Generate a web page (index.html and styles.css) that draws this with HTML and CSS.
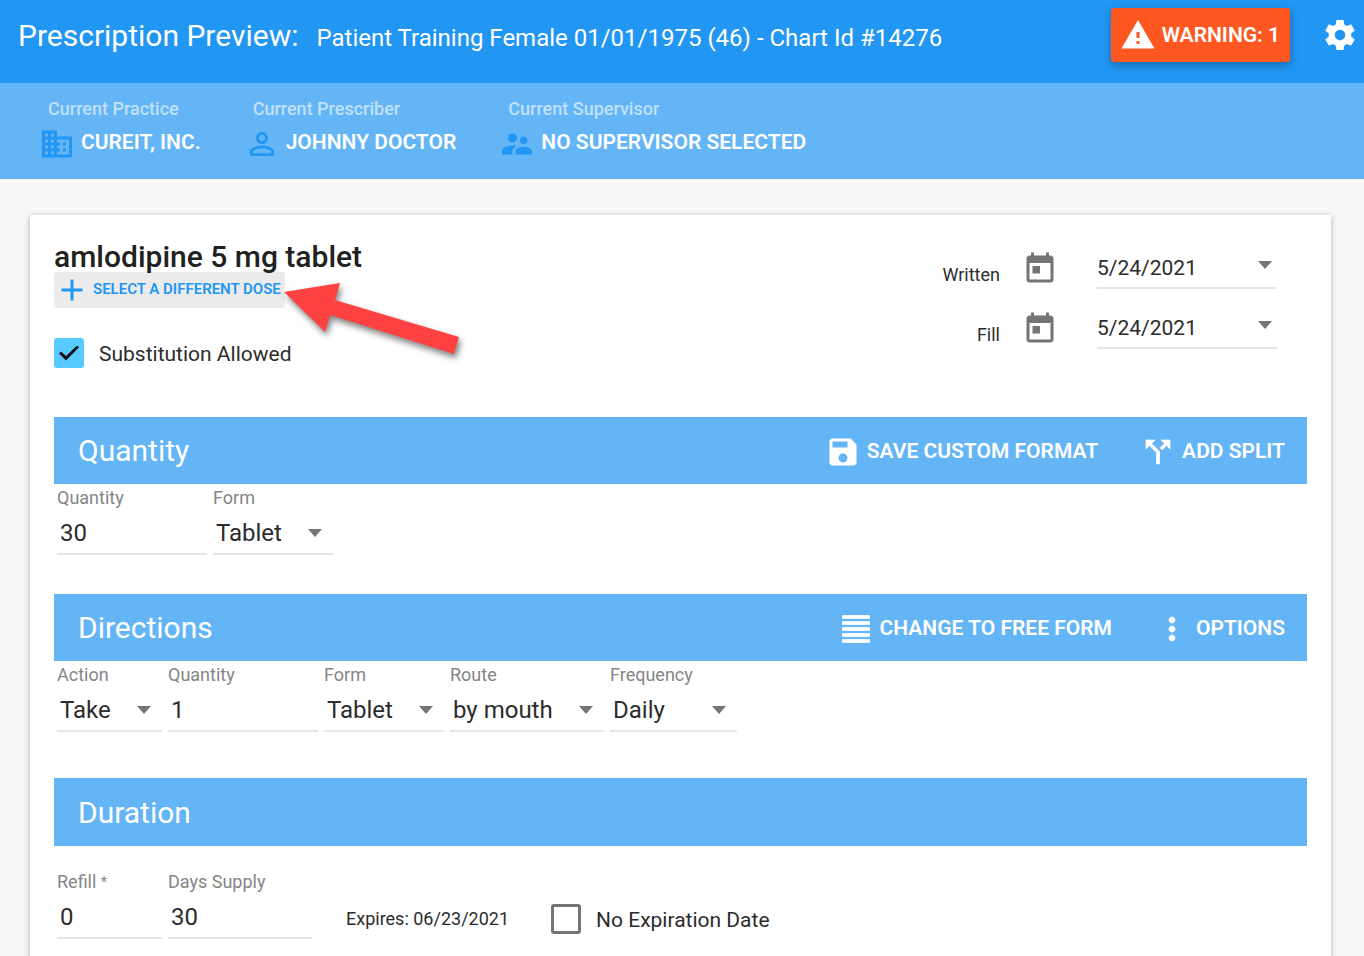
FILE: index.html
```
<!DOCTYPE html>
<html lang="en">
<head>
<meta charset="utf-8">
<title>Prescription Preview</title>
<link rel="stylesheet" href="styles.css">
</head>
<body>
<header class="toolbar">
  <h1 class="toolbar-title">Prescription Preview:</h1>
  <span class="toolbar-patient">Patient Training Female 01/01/1975 (46) - Chart Id #14276</span>
  <button class="warning-button" type="button">
    <svg class="icon" viewBox="0 0 24 24" aria-hidden="true"><path d="M1 21h22L12 2 1 21zm12-3h-2v-2h2v2zm0-4h-2v-4h2v4z"/></svg>
    <span>WARNING: 1</span>
  </button>
  <button class="settings-button" type="button" aria-label="Settings">
    <svg class="icon" viewBox="0 0 24 24" aria-hidden="true"><path d="M19.43 12.98c.04-.32.07-.64.07-.98s-.03-.66-.07-.98l2.11-1.65c.19-.15.24-.42.12-.64l-2-3.46c-.12-.22-.39-.3-.61-.22l-2.49 1c-.52-.4-1.08-.73-1.69-.98l-.38-2.65C14.46 2.18 14.25 2 14 2h-4c-.25 0-.46.18-.49.42l-.38 2.65c-.61.25-1.17.59-1.69.98l-2.49-1c-.23-.09-.49 0-.61.22l-2 3.46c-.13.22-.07.49.12.64l2.11 1.65c-.04.32-.07.65-.07.98s.03.66.07.98l-2.11 1.65c-.19.15-.24.42-.12.64l2 3.46c.12.22.39.3.61.22l2.49-1c.52.4 1.08.73 1.69.98l.38 2.65c.03.24.24.42.49.42h4c.25 0 .46-.18.49-.42l.38-2.65c.61-.25 1.17-.59 1.69-.98l2.49 1c.23.09.49 0 .61-.22l2-3.46c.12-.22.07-.49-.12-.64l-2.11-1.65zM12 15.5c-1.93 0-3.5-1.57-3.5-3.5s1.57-3.5 3.5-3.5 3.5 1.57 3.5 3.5-1.57 3.5-3.5 3.5z"/></svg>
  </button>
</header>

<nav class="context-bar" aria-label="Current context">
  <div class="context">
    <span class="context-label">Current Practice</span>
    <button class="context-value" type="button">
      <svg class="icon" viewBox="0 0 24 24" aria-hidden="true"><path d="M12 7V3H2v18h20V7H12zM6 19H4v-2h2v2zm0-4H4v-2h2v2zm0-4H4V9h2v2zm0-4H4V5h2v2zm4 12H8v-2h2v2zm0-4H8v-2h2v2zm0-4H8V9h2v2zm0-4H8V5h2v2zm10 12h-8v-2h2v-2h-2v-2h2v-2h-2V9h8v10zm-2-8h-2v2h2v-2zm0 4h-2v2h2v-2z"/></svg>
      <span>CUREIT, INC.</span>
    </button>
  </div>
  <div class="context">
    <span class="context-label">Current Prescriber</span>
    <button class="context-value" type="button">
      <svg class="icon" viewBox="0 0 24 24" aria-hidden="true"><path d="M12 5.9c1.16 0 2.1.94 2.1 2.1s-.94 2.1-2.1 2.1S9.9 9.16 9.9 8s.94-2.1 2.1-2.1m0 9c2.97 0 6.1 1.46 6.1 2.1v1.1H5.9V17c0-.64 3.13-2.1 6.1-2.1M12 4C9.79 4 8 5.79 8 8s1.79 4 4 4 4-1.79 4-4-1.79-4-4-4zm0 9c-2.67 0-8 1.34-8 4v3h16v-3c0-2.66-5.33-4-8-4z"/></svg>
      <span>JOHNNY DOCTOR</span>
    </button>
  </div>
  <div class="context">
    <span class="context-label">Current Supervisor</span>
    <button class="context-value" type="button">
      <svg class="icon" viewBox="0 0 24 24" aria-hidden="true"><path d="M16.5 12c1.38 0 2.49-1.12 2.49-2.5S17.88 7 16.5 7C15.12 7 14 8.12 14 9.5s1.12 2.5 2.5 2.5zM9 11c1.66 0 2.99-1.34 2.99-3S10.66 5 9 5C7.34 5 6 6.34 6 8s1.34 3 3 3zm7.5 3c-1.83 0-5.5.92-5.5 2.75V19h11v-2.25c0-1.83-3.67-2.75-5.5-2.75zM9 13c-2.33 0-7 1.17-7 3.5V19h7v-2.25c0-.85.33-2.34 2.37-3.47C10.5 13.1 9.66 13 9 13z"/></svg>
      <span>NO SUPERVISOR SELECTED</span>
    </button>
  </div>
</nav>

<main class="card">
  <section class="summary">
    <div class="drug">
      <h2 class="drug-name">amlodipine 5 mg tablet</h2>
      <div class="dose">
        <button class="dose-button" type="button">
          <svg class="icon" viewBox="0 0 24 24" aria-hidden="true"><path d="M19 13h-6v6h-2v-6H5v-2h6V5h2v6h6v2z"/></svg>
          <span>SELECT A DIFFERENT DOSE</span>
        </button>
        <svg class="pointer" viewBox="0 0 184 84" aria-hidden="true"><path d="M4 12L60 3L55 20L179 57L174 74L50 35L45 52z"/></svg>
      </div>
      <label class="check">
        <input class="check-box" type="checkbox" checked>
        <span>Substitution Allowed</span>
      </label>
    </div>
    <div class="dates">
      <div class="date-row">
        <label class="date-label" for="written">Written</label>
        <svg class="icon" viewBox="0 0 24 24" aria-hidden="true"><path d="M19 3h-1V1h-2v2H8V1H6v2H5c-1.11 0-1.99.9-1.99 2L3 19c0 1.1.89 2 2 2h14c1.1 0 2-.9 2-2V5c0-1.1-.9-2-2-2zm0 16H5V8h14v11zM7 10h5v5H7z"/></svg>
        <div class="date-box">
          <input class="date-input" id="written" type="text" value="5/24/2021">
          <button class="date-open" type="button" aria-label="Open written date calendar"></button>
        </div>
      </div>
      <div class="date-row">
        <label class="date-label" for="fill">Fill</label>
        <svg class="icon" viewBox="0 0 24 24" aria-hidden="true"><path d="M19 3h-1V1h-2v2H8V1H6v2H5c-1.11 0-1.99.9-1.99 2L3 19c0 1.1.89 2 2 2h14c1.1 0 2-.9 2-2V5c0-1.1-.9-2-2-2zm0 16H5V8h14v11zM7 10h5v5H7z"/></svg>
        <div class="date-box">
          <input class="date-input" id="fill" type="text" value="5/24/2021">
          <button class="date-open" type="button" aria-label="Open fill date calendar"></button>
        </div>
      </div>
    </div>
  </section>

  <section class="section section-quantity">
    <header class="section-bar">
      <h2 class="section-title">Quantity</h2>
      <button class="bar-button" type="button">
        <svg class="icon" viewBox="0 0 24 24" aria-hidden="true"><path d="M17 3H5c-1.11 0-2 .9-2 2v14c0 1.1.89 2 2 2h14c1.1 0 2-.9 2-2V7l-4-4zm-5 16c-1.66 0-3-1.34-3-3s1.34-3 3-3 3 1.34 3 3-1.34 3-3 3zm3-10H5V5h10v4z"/></svg>
        <span>SAVE CUSTOM FORMAT</span>
      </button>
      <button class="bar-button" type="button">
        <svg class="icon" viewBox="0 0 24 24" aria-hidden="true"><path d="M14 4l2.29 2.29-2.88 2.88 1.42 1.42 2.88-2.88L20 10V4zm-4 0H4v6l2.29-2.29 4.71 4.7V20h2v-8.41l-5.29-5.3z" stroke="currentColor" stroke-width=".5"/></svg>
        <span>ADD SPLIT</span>
      </button>
    </header>
    <div class="fields">
      <div class="field field-l">
        <label class="field-label" for="qty">Quantity</label>
        <input class="field-input" id="qty" type="text" value="30">
      </div>
      <div class="field field-m">
        <label class="field-label" for="form">Form</label>
        <div class="select"><select class="field-input" id="form"><option>Tablet</option></select></div>
      </div>
    </div>
  </section>

  <section class="section section-directions">
    <header class="section-bar">
      <h2 class="section-title">Directions</h2>
      <button class="bar-button" type="button">
        <svg class="icon" viewBox="0 0 24 24" aria-hidden="true"><path d="M3 21h18v-2H3v2zm0-4h18v-2H3v2zm0-4h18v-2H3v2zm0-4h18V7H3v2zm0-6v2h18V3H3z" stroke="currentColor" stroke-width=".5"/></svg>
        <span>CHANGE TO FREE FORM</span>
      </button>
      <button class="bar-button" type="button">
        <svg class="icon" viewBox="0 0 24 24" aria-hidden="true"><path d="M12 8c1.1 0 2-.9 2-2s-.9-2-2-2-2 .9-2 2 .9 2 2 2zm0 2c-1.1 0-2 .9-2 2s.9 2 2 2 2-.9 2-2-.9-2-2-2zm0 6c-1.1 0-2 .9-2 2s.9 2 2 2 2-.9 2-2-.9-2-2-2z" stroke="currentColor" stroke-width=".5"/></svg>
        <span>OPTIONS</span>
      </button>
    </header>
    <div class="fields">
      <div class="field field-s">
        <label class="field-label" for="action">Action</label>
        <div class="select"><select class="field-input" id="action"><option>Take</option></select></div>
      </div>
      <div class="field field-l">
        <label class="field-label" for="dir-qty">Quantity</label>
        <input class="field-input" id="dir-qty" type="text" value="1">
      </div>
      <div class="field field-m">
        <label class="field-label" for="dir-form">Form</label>
        <div class="select"><select class="field-input" id="dir-form"><option>Tablet</option></select></div>
      </div>
      <div class="field field-route">
        <label class="field-label" for="route">Route</label>
        <div class="select"><select class="field-input" id="route"><option>by mouth</option></select></div>
      </div>
      <div class="field field-frequency">
        <label class="field-label" for="frequency">Frequency</label>
        <div class="select"><select class="field-input" id="frequency"><option>Daily</option></select></div>
      </div>
    </div>
  </section>

  <section class="section section-duration">
    <header class="section-bar">
      <h2 class="section-title">Duration</h2>
    </header>
    <div class="fields">
      <div class="field field-s">
        <label class="field-label" for="refill">Refill <span class="required">*</span></label>
        <input class="field-input" id="refill" type="text" value="0" required>
      </div>
      <div class="field field-days">
        <label class="field-label" for="days">Days Supply</label>
        <input class="field-input" id="days" type="text" value="30">
      </div>
      <span class="expires">Expires: 06/23/2021</span>
      <label class="check check-expiration">
        <input class="check-box" type="checkbox">
        <span>No Expiration Date</span>
      </label>
    </div>
  </section>
</main>
</body>
</html>
```
FILE: styles.css
```
* {
  box-sizing: border-box;
}

body {
  margin: 0;
  min-height: 100vh;
  overflow: hidden;
  background: #f8f8f8;
  color: #2c2c2c;
  font-family: Roboto, "Liberation Sans", sans-serif;
  font-size: 21px;
}

h1,
h2 {
  margin: 0;
}

button,
input,
select {
  margin: 0;
  padding: 0;
  border: 0;
  background: none;
  color: inherit;
  font: inherit;
}

button {
  display: flex;
  align-items: center;
  font-weight: 600;
  cursor: pointer;
}

.icon {
  flex: none;
  width: 36px;
  height: 36px;
  fill: currentColor;
}

/* Top toolbar */
.toolbar {
  display: flex;
  align-items: baseline;
  height: 83px;
  padding: 8px 6px 0 18px;
  background: #2196f3;
  color: #fff;
}

.toolbar-title {
  font-size: 30px;
  font-weight: 400;
  line-height: 56px;
}

.toolbar-patient {
  margin-left: 18px;
  font-size: 24px;
}

.warning-button {
  align-self: flex-start;
  gap: 6px;
  height: 54px;
  margin-left: auto;
  padding: 0 10px 0 9px;
  border-radius: 3px;
  background: #ff5722;
  box-shadow: 0 3px 8px rgba(0, 0, 0, 0.3);
}

.settings-button {
  align-self: flex-start;
  height: 54px;
  margin-left: 32px;
}

/* Practice, prescriber and supervisor */
.context-bar {
  display: flex;
  gap: 43px;
  height: 96px;
  padding: 14px 39px;
  background: #64b5f6;
}

.context-label {
  display: block;
  padding-left: 9px;
  color: rgba(255, 255, 255, 0.6);
  font-size: 18px;
  font-weight: 500;
  line-height: 24px;
}

.context-value {
  gap: 6px;
  height: 42px;
  color: #fff;
}

.context-value .icon {
  margin-top: 4px;
  color: #2196f3;
}

/* Prescription card */
.card {
  margin: 36px 33px 0 30px;
  padding: 24px 24px 48px;
  background: #fff;
  box-shadow: 0 1px 6px rgba(0, 0, 0, 0.3);
}

.summary {
  display: flex;
  justify-content: space-between;
  padding-bottom: 49px;
}

.drug {
  padding-top: 3px;
}

/* Keeps descenders above the button that follows */
.drug-name {
  position: relative;
  z-index: 1;
  color: #212121;
  font-size: 30px;
  font-weight: 500;
  line-height: 30px;
}

.dose {
  position: relative;
  width: max-content;
  margin-bottom: 30px;
}

.dose-button {
  gap: 3px;
  height: 36px;
  padding: 0 4px 0 0;
  border-radius: 3px;
  background: #ebebeb;
  color: #2196f3;
  font-size: 15px;
}

.dose-button span {
  padding-bottom: 2px;
}

.pointer {
  position: absolute;
  top: 8px;
  left: 226px;
  width: 184px;
  height: 84px;
  fill: #fe4242;
  filter: drop-shadow(2px 4px 3px rgba(0, 0, 0, 0.5));
  pointer-events: none;
}

.check {
  display: flex;
  align-items: center;
  gap: 15px;
}

.check span {
  padding-top: 2px;
}

.check-box {
  display: grid;
  place-items: center;
  width: 30px;
  height: 30px;
  border: 3px solid #757575;
  border-radius: 3px;
  appearance: none;
}

.check-box:checked {
  border: 0;
  background: #57caff;
}

.check-box:checked::before {
  content: "";
  width: 20px;
  height: 15px;
  background: #111;
  clip-path: polygon(0 53%, 10% 40%, 35% 70%, 90% 0, 100% 12%, 35% 100%);
}

.dates {
  display: grid;
  gap: 10px;
  align-content: start;
  margin-right: 30px;
}

.date-row {
  display: flex;
  align-items: flex-end;
  justify-content: flex-end;
  height: 50px;
}

.date-label {
  font-size: 18px;
  line-height: 28px;
}

.date-row .icon {
  margin: 0 39px 2px 22px;
  color: #757575;
}

.date-box {
  display: flex;
  width: 180px;
  height: 42px;
  border-bottom: 2px solid #e6e6e6;
}

.date-input {
  flex: 1;
  min-width: 0;
  padding-top: 2px;
}

.date-open {
  width: 24px;
  height: 36px;
}

.date-open::before,
.select::after {
  content: "";
  border: 7px solid transparent;
  border-top: 8px solid #757575;
  border-bottom: 0;
}

.date-open::before {
  margin-left: 5px;
}

/* Form sections */
.section-bar {
  display: flex;
  align-items: center;
  gap: 42px;
  min-height: 67px;
  padding: 0 22px 0 24px;
  background: #64b5f6;
  color: #fff;
}

.section-title {
  margin-right: auto;
  font-size: 30px;
  font-weight: 400;
}

.bar-button {
  gap: 6px;
  height: 54px;
}

.bar-button .icon {
  margin-top: 2px;
}

.section-quantity {
  padding-bottom: 39px;
}

.section-directions {
  padding-bottom: 46px;
}

.section-duration .section-bar {
  min-height: 68px;
}

.section-duration .fields {
  padding-top: 22px;
}

.fields {
  display: flex;
  gap: 6px;
  padding-left: 3px;
}

.field-s {
  width: 105px;
}

.field-m {
  width: 120px;
}

.field-l {
  width: 150px;
}

.field-route {
  width: 154px;
}

.field-frequency {
  width: 127px;
}

.field-days {
  width: 144px;
}

.field-label {
  display: block;
  color: #858585;
  font-size: 18px;
  line-height: 28px;
}

.required {
  font-size: 15px;
  vertical-align: top;
}

.field-input {
  display: block;
  width: 100%;
  height: 43px;
  padding-left: 3px;
  border-bottom: 2px solid #e6e6e6;
  font-size: 24px;
  appearance: none;
}

.select {
  display: grid;
}

.select > .field-input,
.select::after {
  grid-area: 1 / 1;
}

.select::after {
  place-self: center end;
  width: 0;
  margin: 0 11px 2px 0;
  pointer-events: none;
}

.expires {
  margin-left: 28px;
  padding-top: 39px;
  font-size: 18px;
  line-height: 24px;
}

.check-expiration {
  margin-left: 36px;
  padding-top: 30px;
}
```
